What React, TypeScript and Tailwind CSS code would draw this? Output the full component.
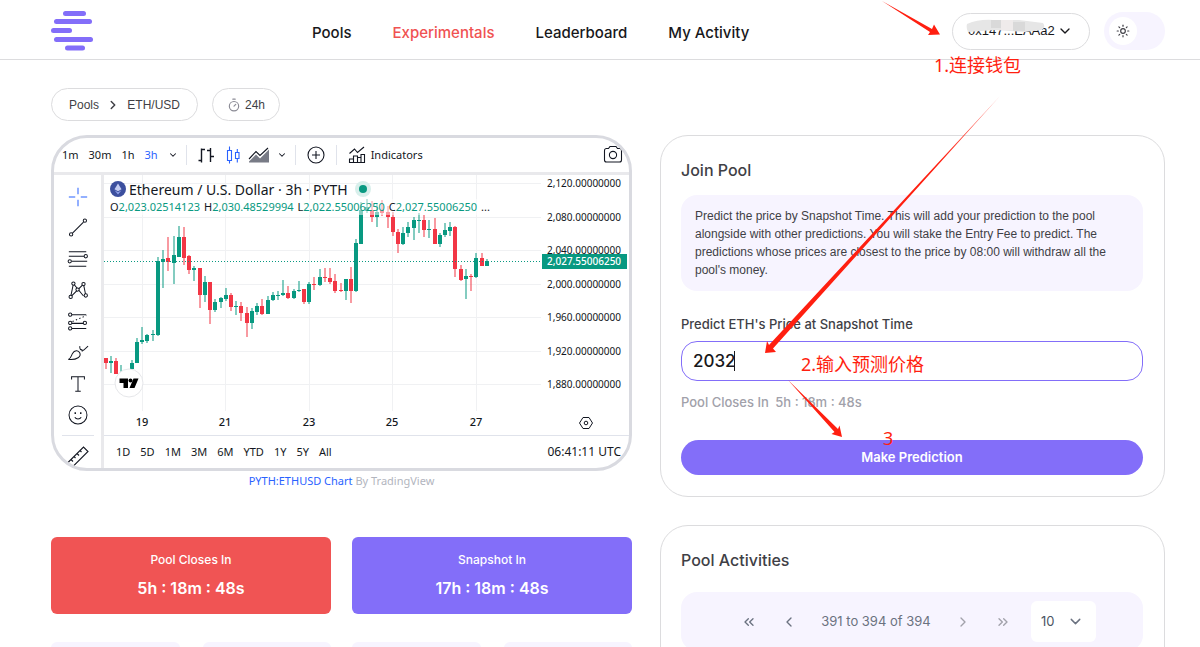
import type { ReactNode } from 'react'
import {
  ChevronDown,
  ChevronLeft,
  ChevronRight,
  ChevronsLeft,
  ChevronsRight,
  Sun,
  Timer,
} from 'lucide-react'
import { clsx } from 'clsx'

const navLinks = [
  { href: '#pools', label: 'Pools' },
  { href: '#experimentals', label: 'Experimentals', active: true },
  { href: '#leaderboard', label: 'Leaderboard' },
  { href: '#activity', label: 'My Activity' },
]

const intervals = ['1m', '30m', '1h', '3h']
const ranges = ['1D', '5D', '1M', '3M', '6M', 'YTD', '1Y', '5Y', 'All']

const prices = [
  { y: 8, label: '2,120.00000000' },
  { y: 42, label: '2,080.00000000' },
  { y: 75, label: '2,040.00000000' },
  { y: 109, label: '2,000.00000000' },
  { y: 142, label: '1,960.00000000' },
  { y: 176, label: '1,920.00000000' },
  { y: 209, label: '1,880.00000000' },
]

const dates = [
  { x: 38, label: '19' },
  { x: 121, label: '21' },
  { x: 205, label: '23' },
  { x: 288, label: '25' },
  { x: 372, label: '27' },
]

const ohlc = [
  ['O', '2,023.02514123'],
  ['H', '2,030.48529994'],
  ['L', '2,022.55006250'],
  ['C', '2,027.55006250'],
]

// [up, high, body top, body bottom, low]
const candles = [
  [0, 183, 183, 188, 194],
  [1, 181, 186, 188, 198],
  [0, 183, 186, 199, 199],
  [1, 190, 200, 201, 202],
  [1, 196, 198, 202, 202],
  [1, 185, 188, 194, 197],
  [1, 163, 167, 188, 188],
  [1, 152, 165, 167, 169],
  [1, 159, 160, 166, 168],
  [1, 155, 159, 160, 166],
  [1, 82, 86, 160, 161],
  [1, 75, 84, 87, 113],
  [0, 62, 83, 87, 96],
  [1, 61, 80, 88, 109],
  [1, 51, 62, 82, 82],
  [0, 52, 62, 83, 90],
  [0, 80, 81, 95, 99],
  [1, 91, 93, 95, 106],
  [0, 93, 93, 120, 133],
  [1, 101, 107, 120, 127],
  [0, 107, 107, 135, 149],
  [1, 124, 127, 135, 137],
  [1, 122, 123, 127, 133],
  [1, 113, 120, 124, 126],
  [0, 118, 120, 132, 136],
  [1, 126, 131, 132, 140],
  [0, 127, 131, 138, 146],
  [0, 132, 138, 148, 162],
  [1, 133, 136, 148, 154],
  [1, 128, 131, 137, 140],
  [0, 124, 131, 139, 140],
  [1, 121, 125, 139, 139],
  [1, 117, 120, 125, 126],
  [1, 116, 120, 121, 125],
  [1, 105, 118, 120, 121],
  [0, 111, 118, 123, 124],
  [1, 114, 116, 123, 124],
  [1, 106, 115, 116, 117],
  [0, 114, 114, 127, 129],
  [1, 107, 109, 127, 129],
  [0, 102, 109, 110, 115],
  [1, 94, 102, 110, 111],
  [0, 93, 102, 103, 107],
  [0, 93, 103, 107, 109],
  [0, 99, 106, 116, 118],
  [0, 108, 115, 116, 117],
  [1, 104, 104, 116, 125],
  [0, 92, 104, 116, 128],
  [1, 64, 68, 116, 117],
  [1, 27, 35, 69, 69],
  [1, 24, 32, 36, 38],
  [0, 26, 35, 42, 47],
  [1, 28, 37, 42, 52],
  [0, 25, 35, 38, 41],
  [0, 31, 37, 42, 53],
  [0, 37, 42, 57, 61],
  [0, 54, 57, 69, 78],
  [1, 52, 58, 69, 70],
  [1, 47, 52, 58, 62],
  [1, 42, 45, 53, 65],
  [1, 38, 45, 46, 58],
  [0, 40, 45, 55, 62],
  [1, 45, 54, 55, 63],
  [0, 43, 54, 69, 69],
  [1, 58, 60, 69, 72],
  [1, 48, 55, 60, 62],
  [1, 47, 52, 56, 61],
  [0, 51, 52, 94, 102],
  [0, 90, 94, 105, 106],
  [1, 94, 101, 104, 124],
  [0, 99, 101, 102, 116],
  [1, 78, 83, 102, 103],
  [0, 78, 83, 91, 91],
  [1, 84, 86, 91, 91],
]

function Logo() {
  return (
    <svg viewBox="0 0 43 40" className="h-10 w-[43px]" fill="#836ef9" aria-hidden="true">
      <rect x="12" y="0" width="23" height="5" rx="2.5" />
      <rect x="3" y="8" width="38" height="5" rx="2.5" />
      <rect x="0" y="17" width="21" height="5" rx="2.5" />
      <rect x="3" y="26" width="39" height="5" rx="2.5" />
      <rect x="14" y="34.500" width="20" height="5" rx="2.500" />
    </svg>
  )
}

function Header() {
  return (
    <header className="flex h-[60px] shrink-0 items-center border-b border-[#dcdcde] pt-[3px] pr-[35px] pl-[51px]">
      <a href="#home" aria-label="Home">
        <Logo />
      </a>
      <nav className="ml-[218px] flex gap-[41px] pt-1 text-[15px] font-medium">
        {navLinks.map((link) => (
          <a key={link.label} href={link.href} className={clsx(link.active ? 'text-[#f05252]' : 'text-[#18181b]')}>
            {link.label}
          </a>
        ))}
      </nav>
      <div className="ml-auto flex items-center gap-[14px]">
        <button className="relative flex h-[37px] w-[138px] items-center justify-between rounded-full border border-[#dcdcde] pr-4 pl-[15px] font-['Liberation_Sans',sans-serif] text-[13px] text-[#18181b]">
          0x147...EAAa2
          <ChevronDown className="h-4 w-4" />
          <svg viewBox="0 0 84 14" className="absolute top-[5px] left-[12px] h-[14px] w-[84px]" aria-hidden="true">
            <path d="M2 5Q14 0 28 1L54 1L78 4Q81 8 77 11L60 13L30 11L3 13Q1 9 2 5Z" fill="#e6e6e6" />
            <path d="M26 1h10v8H26zM48 3h12v9H48z" fill="#d9d9d9" />
            <path d="M36 1h12v10H36z" fill="#efebeb" />
          </svg>
        </button>
        <button role="switch" aria-checked="false" aria-label="Dark mode" className="flex h-[38px] w-[61px] items-center rounded-full bg-[#f7f4ff] px-[5px]">
          <span className="flex h-7 w-7 items-center justify-center rounded-full bg-white">
            <Sun className="h-[14px] w-[14px] text-[#3f3f46]" strokeWidth={2} />
          </span>
        </button>
      </div>
    </header>
  )
}

function Breadcrumbs() {
  return (
    <div className="flex gap-[14px] font-['Liberation_Sans',sans-serif] text-[12px] text-[#3f3f46]">
      <div className="flex h-[33px] w-[147px] items-center justify-between rounded-full border border-[#dcdcde] px-[17px]">
        <a href="#pools">Pools</a>
        <ChevronRight className="h-[14px] w-[14px]" strokeWidth={2.5} />
        <a href="#eth-usd">ETH/USD</a>
      </div>
      <div className="flex h-[33px] w-[68px] items-center justify-center gap-1 rounded-full border border-[#dcdcde]">
        <Timer className="h-[14px] w-[14px] text-[#8b8b95]" strokeWidth={2} />
        24h
      </div>
    </div>
  )
}

function ToolIcon({ children, className }: { children: ReactNode; className?: string }) {
  return (
    <svg viewBox="0 0 24 24" className={clsx('h-6 w-6', className)} fill="none" stroke="currentColor" strokeWidth="1.1" aria-hidden="true">
      {children}
    </svg>
  )
}

function ChartToolbar() {
  return (
    <div className="flex h-[34px] items-center pr-1 pl-2">
      <div className="flex items-center gap-[10px]">
        {intervals.map((item) => (
          <button key={item} className={clsx(item === '3h' && 'text-[#2962ff]')}>
            {item}
          </button>
        ))}
        <ChevronDown className="h-[10px] w-[10px]" strokeWidth={2.5} />
      </div>
      <span className="mx-2 h-5 w-px bg-[#e0e3eb]" />
      <div className="flex items-center gap-[2px]">
        <button aria-label="Bars">
          <ToolIcon>
            <path d="M6.500 5.500v14M3.500 17.500h3M6.500 6.500h3.500M15.500 5v14M15.500 13.500h3.500M12 7.500h3.500" strokeWidth="1.400" />
          </ToolIcon>
        </button>
        <button aria-label="Candles" className="text-[#2962ff]">
          <ToolIcon>
            <path d="M6.500 7.500h4v10h-4zM8.500 3.500v4M8.500 17.500v3M14.500 9.500h3.500v6h-3.500zM16.300 6v3.500M16.300 15.500v4" />
          </ToolIcon>
        </button>
        <button aria-label="Area">
          <ToolIcon>
            <path d="M2 18.500L9 11.500l4 4 9-9v13H2z" fill="#787b86" stroke="none" />
            <path d="M2 16L9 8.500l4 4 8-7.500" />
          </ToolIcon>
        </button>
        <ChevronDown className="ml-1 h-[10px] w-[10px]" strokeWidth={2.5} />
      </div>
      <span className="mx-2 h-5 w-px bg-[#e0e3eb]" />
      <button aria-label="Compare">
        <ToolIcon>
          <circle cx="12" cy="12" r="8" />
          <path d="M12 8v8M8 12h8" />
        </ToolIcon>
      </button>
      <span className="mx-2 h-5 w-px bg-[#e0e3eb]" />
      <button className="flex items-center gap-[2px]">
        <ToolIcon>
          <path d="M4.500 10.500l5-4.500 3 3.500 6.500-5.500M4.500 20v-4h4v4M8.500 16v-3h4v7M12.500 14.500h3.500v5M16 19.500v-8h3.500v8.500M4 19.500h16" />
        </ToolIcon>
        Indicators
      </button>
      <button aria-label="Take a snapshot" className="ml-auto">
        <ToolIcon>
          <path d="M3.500 7.500a2 2 0 0 1 2-2h2l1.500-2h6l1.500 2h2a2 2 0 0 1 2 2v9.500a2 2 0 0 1-2 2h-13a2 2 0 0 1-2-2z" />
          <circle cx="12" cy="12" r="3.600" />
        </ToolIcon>
      </button>
    </div>
  )
}

const drawingTools = [
  { label: 'Cross', icon: <path d="M12 2v7M12 15v7M2 12h7M15 12h7" stroke="#2962ff" /> },
  {
    label: 'Trend line',
    icon: (
      <>
        <circle cx="4.500" cy="19" r="1.800" />
        <circle cx="19.500" cy="4" r="1.800" />
        <path d="M6 17.500L18 5.500" />
      </>
    ),
  },
  {
    label: 'Fibonacci',
    icon: (
      <>
        <path d="M2 4h19M2 9h17M5 14.500h17M2 20h19" />
        <circle cx="20.500" cy="9" r="1.800" fill="#fff" />
        <circle cx="3" cy="14.500" r="1.800" fill="#fff" />
      </>
    ),
  },
  {
    label: 'Patterns',
    icon: (
      <>
        <path d="M4 19.500L7 5l11 13.500M4 19.500L18 5.500l2.500 12.500" />
        <circle cx="7" cy="5" r="1.800" fill="#fff" />
        <circle cx="18" cy="5.500" r="1.800" fill="#fff" />
        <circle cx="4" cy="19.500" r="1.800" fill="#fff" />
        <circle cx="20.500" cy="18" r="1.800" fill="#fff" />
        <circle cx="11.500" cy="11.500" r="1.800" fill="#fff" />
      </>
    ),
  },
  {
    label: 'Forecasting',
    icon: (
      <>
        <path d="M4 4h17M4 13.500h15M4 19h17" />
        <path d="M6 11.500L21 5" strokeDasharray="1.5 2.500" />
        <circle cx="3.500" cy="4" r="1.800" fill="#fff" />
        <circle cx="3.500" cy="13" r="1.800" fill="#fff" />
        <circle cx="19.500" cy="13" r="1.800" fill="#fff" />
        <circle cx="3.500" cy="19" r="1.800" fill="#fff" />
      </>
    ),
  },
  {
    label: 'Brush',
    icon: <path d="M1.500 19c3-1 3-4 4.500-6.500C8 9 12.500 8.500 14 12S11.500 20 1.500 19zM14 4.500c-.5 3 1 5 4 4.500L23 4.500M14 8c2 0 3 1 2.500 2.500" />,
  },
  { label: 'Text', icon: <path d="M5 7V4h14v3M12 4v16M9 20h6" /> },
  {
    label: 'Icons',
    icon: (
      <>
        <circle cx="12" cy="12" r="9.800" />
        <path d="M8.500 14.500c1.500 2.500 5.500 2.500 7 0" />
        <path d="M9 9v2M15 9v2" strokeWidth="1.600" />
      </>
    ),
  },
]

function DrawingBar() {
  return (
    <div className="flex w-[50px] shrink-0 flex-col items-center border-r-[3px] border-[#e9e9ec] pt-[6px]">
      <div className="flex h-[250px] flex-col">
        {drawingTools.map((tool) => (
          <button key={tool.label} aria-label={tool.label} className="flex flex-1 items-center">
            <ToolIcon className="h-[22px] w-[22px]">{tool.icon}</ToolIcon>
          </button>
        ))}
      </div>
      <span className="mt-1 h-px w-8 bg-[#e0e3eb]" />
      <button aria-label="Measure" className="mt-2">
        <ToolIcon>
          <path d="M2 18.500L17.500 3l4.500 4.500L6.500 23zM5 15.500l2 2M8 12.500l1.500 1.500M11 9.500l2 2M14 6.500l1.500 1.500" />
        </ToolIcon>
      </button>
    </div>
  )
}

function PriceChart() {
  return (
    <svg viewBox="0 0 525 260" className="block w-full" fontFamily="'Noto Sans', sans-serif" fontSize="10" fill="#131722">
      <g stroke="#f0f1f3" strokeWidth="1">
        {prices.map((p) => (
          <path key={p.label} d={`M0 ${p.y + 0.5}H437`} />
        ))}
        {dates.map((d) => (
          <path key={d.label} d={`M${d.x + 0.5} 0V236`} />
        ))}
      </g>
      {candles.map(([up, high, top, bottom, low], i) => {
        const x = Math.round(1.7 + i * 5.22)
        return (
          <g key={i} fill={up ? '#089981' : '#f23645'}>
            <rect x={x - 0.5} y={high} width="1" height={low - high} />
            <rect x={x - 2} y={top} width="4" height={bottom - top} />
          </g>
        )
      })}
      <path d="M0 86.500H437" stroke="#089981" strokeDasharray="1 2" />
      {prices.map((p) => (
        <text key={p.label} x="443" y={p.y + 4}>
          {p.label}
        </text>
      ))}
      <rect x="438" y="79" width="85" height="15" fill="#089981" />
      <text x="443" y="90" fill="#fff" fontWeight="500">
        2,027.55006250
      </text>
      <g fontSize="11" fontWeight="500" textAnchor="middle">
        {dates.map((d) => (
          <text key={d.label} x={d.x} y="251">
            {d.label}
          </text>
        ))}
      </g>
      <g fill="none" stroke="#131722">
        <path d="M479 242.500h6l3.500 5.500-3.500 5.500h-6l-3.500-5.500z" />
        <circle cx="482" cy="248" r="1.800" />
      </g>
      <circle cx="25" cy="208" r="14" fill="#fff" stroke="#e6e7ea" />
      <path d="M15.500 203.500h8.500v9.500h-4.500v-5h-4zM29.500 203.500h5l-4 9.500h-5z" fill="#000" />
      <circle cx="26.500" cy="205.500" r="2" fill="#000" />
    </svg>
  )
}

function ChartLegend() {
  return (
    <div className="absolute top-[4px] left-[6px] text-[#131722]">
      <div className="flex h-5 items-center gap-[3px] text-[14px]">
        <svg viewBox="0 0 16 16" className="h-4 w-4" aria-hidden="true">
          <circle cx="8" cy="8" r="8" fill="#3c4f9e" />
          <path d="M8 2.500L4.500 8.300 8 10.300l3.500-2z" fill="#c5cdf2" />
          <path d="M4.500 9.200L8 13.500l3.500-4.300L8 11.200z" fill="#8fa0e8" />
        </svg>
        <span>Ethereum / U.S. Dollar · 3h · PYTH</span>
        <span className="ml-1 flex h-4 w-4 items-center justify-center rounded-full bg-[#d8efeb]">
          <span className="h-2 w-2 rounded-full bg-[#089981]" />
        </span>
      </div>
      <div className="flex h-4 items-center gap-1 bg-white/50 text-[11px]">
        {ohlc.map(([key, value]) => (
          <span key={key}>
            {key}
            <span className="text-[#089981]">{value}</span>
          </span>
        ))}
        <span>...</span>
      </div>
    </div>
  )
}

function TradingChart() {
  return (
    <section className="font-['Noto_Sans',sans-serif] text-[11px] text-[#131722]">
      <div className="overflow-hidden rounded-[36px] border-[3px] border-[#d9dae0] bg-white">
        <ChartToolbar />
        <div className="flex border-t-[3px] border-[#e9e9ec]">
          <DrawingBar />
          <div className="min-w-0 flex-1">
            <div className="relative">
              <PriceChart />
              <ChartLegend />
            </div>
            <div className="flex h-[33px] items-center gap-[10px] border-t border-[#e0e3eb] pr-2 pl-3">
              {ranges.map((range) => (
                <button key={range}>{range}</button>
              ))}
              <span className="ml-auto text-[12px]">06:41:11 UTC</span>
            </div>
          </div>
        </div>
      </div>
      <p className="mt-[2px] text-center leading-4 text-[#b2b5be]">
        <a href="#chart" className="text-[#2962ff]">
          PYTH:ETHUSD Chart
        </a>{' '}
        By TradingView
      </p>
    </section>
  )
}

function Countdown({ label, value, className }: { label: string; value: string; className: string }) {
  return (
    <div>
      <div className={clsx('flex h-[77px] flex-col items-center justify-center gap-2 rounded-md text-white', className)}>
        <span className="text-[12px] leading-4 font-medium">{label}</span>
        <span className="text-[16px] leading-6 font-semibold">{value}</span>
      </div>
      <div className="mt-7 grid grid-cols-2 gap-[23px]">
        <div className="h-16 rounded-md bg-[#f7f4ff]" />
        <div className="h-16 rounded-md bg-[#f7f4ff]" />
      </div>
    </div>
  )
}

function JoinPool() {
  return (
    <form className="rounded-[28px] border border-[#dcdcde] pt-[22px] pr-[21px] pb-[21px] pl-5">
      <h2 className="text-[16px] leading-6 font-medium text-[#3f3f46]">Join Pool</h2>
      <p className="mt-[13px] rounded-2xl bg-[#f7f4ff] px-[14px] py-3 font-['Liberation_Sans',sans-serif] text-[12px] leading-[18px] text-[#3f3f46]">
        Predict the price by Snapshot Time. This will add your prediction to the pool alongside with other predictions.
        You will stake the Entry Fee to predict. The predictions whose prices are closest to the price by 08:00 will
        withdraw all the pool's money.
      </p>
      <label htmlFor="price" className="mt-[23px] block text-[13px] leading-5 font-medium text-[#3f3f46]">
        Predict ETH's Price at Snapshot Time
      </label>
      <div className="relative mt-[7px]">
        <input
          id="price"
          defaultValue="2032"
          className="block h-10 w-full rounded-2xl border border-[#836ef9] px-[11px] text-[17px] font-medium text-[#18181b] outline-none"
        />
        <span className="absolute top-[10px] left-[53px] h-5 w-px bg-[#18181b]" />
      </div>
      <p className="mt-[11px] text-[13px] leading-5 font-medium text-[#a1a1aa]">
        Pool Closes In <span className="ml-[3px]">5h : 18m : 48s</span>
      </p>
      <button
        type="button"
        className="mt-7 block h-[35px] w-full rounded-full bg-[#836ef9] text-[13px] font-semibold text-white"
      >
        Make Prediction
      </button>
    </form>
  )
}

function PoolActivities() {
  return (
    <section className="mt-7 rounded-[28px] border border-[#dcdcde] pt-[22px] pr-[21px] pb-[21px] pl-5">
      <h2 className="text-[16px] leading-6 font-medium text-[#3f3f46]">Pool Activities</h2>
      <div className="mt-5 flex items-center rounded-2xl bg-[#f7f4ff] py-[9px] pr-[47px] pl-[60px] text-[13px] text-[#6b7280]">
        <div className="flex flex-1 items-center justify-between pr-5">
          <button aria-label="First page">
            <ChevronsLeft className="h-4 w-4" />
          </button>
          <button aria-label="Previous page">
            <ChevronLeft className="h-4 w-4" />
          </button>
          <span>391 to 394 of 394</span>
          <button aria-label="Next page" className="text-[#a1a1aa]">
            <ChevronRight className="h-4 w-4" />
          </button>
          <button aria-label="Last page" className="text-[#a1a1aa]">
            <ChevronsRight className="h-4 w-4" />
          </button>
        </div>
        <div className="relative">
          <select
            aria-label="Rows per page"
            defaultValue="10"
            className="h-[41px] w-[65px] appearance-none rounded-md bg-white pl-[10px] text-[13px] text-[#4b5563]"
          >
            <option>10</option>
            <option>20</option>
            <option>50</option>
          </select>
          <ChevronDown className="pointer-events-none absolute top-3 right-3 h-[17px] w-[17px]" />
        </div>
      </div>
      <div className="h-24" />
    </section>
  )
}

// Step arrows and captions drawn over the page
function Annotations() {
  return (
    <div className="pointer-events-none absolute inset-0 font-['Noto_Sans','Noto_Sans_CJK_SC',sans-serif] text-[18px] leading-6 text-[#ff1f10]">
      <svg className="absolute top-0 left-0 h-[647px] w-[1200px]" viewBox="0 0 1200 647" fill="#ff1f10" aria-hidden="true">
        <defs>
          <linearGradient id="fade" gradientUnits="userSpaceOnUse" x1="1000" y1="96" x2="940" y2="162">
            <stop offset="0" stopColor="#ff1f10" stopOpacity="0.5" />
            <stop offset="1" stopColor="#ff1f10" />
          </linearGradient>
        </defs>
        <path d="M882 1L932 29L934 24.500L940 34.500L928 35L930 32Z" />
        <path d="M1000 96L769 345L767 341L765 353L776 352L773 348.500Z" fill="url(#fade)" />
        <path d="M788 380L838 429L839.500 425.500L842 437L831.500 434L834.500 432Z" />
      </svg>
      <span className="absolute top-[53px] left-[934px]">1.连接钱包</span>
      <span className="absolute top-[352px] left-[801px]">2.输入预测价格</span>
      <span className="absolute top-[426px] left-[883px]">3</span>
    </div>
  )
}

export default function App() {
  return (
    <div className="relative flex h-screen flex-col overflow-hidden bg-white font-['Inter',sans-serif]">
      <Header />
      <main className="pt-7 pr-[35px] pl-[51px]">
        <Breadcrumbs />
        <div className="mt-[14px] grid grid-cols-[581fr_505fr] gap-7">
          <div>
            <TradingChart />
            <div className="mt-12 grid grid-cols-2 gap-[21px]">
              <Countdown label="Pool Closes In" value="5h : 18m : 48s" className="bg-[#f05454]" />
              <Countdown label="Snapshot In" value="17h : 18m : 48s" className="bg-[#836ef9]" />
            </div>
          </div>
          <div>
            <JoinPool />
            <PoolActivities />
          </div>
        </div>
      </main>
      <Annotations />
    </div>
  )
}
